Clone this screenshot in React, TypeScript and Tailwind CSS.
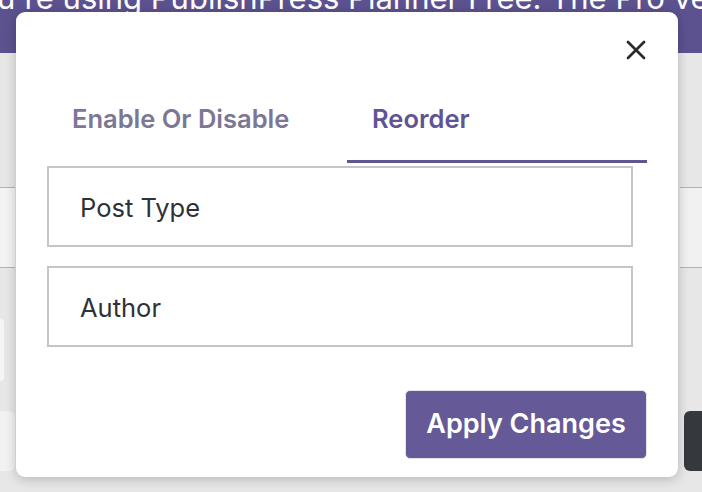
import { X } from "lucide-react";

const tabs = [
  { id: "toggle", label: "Enable Or Disable" },
  { id: "reorder", label: "Reorder" },
];

const fields = ["Post Type", "Author"];

export default function App() {
  const active = "reorder";

  return (
    <div className="relative w-[702px] h-[492px] overflow-hidden bg-[#e7e7e8] font-['Inter',sans-serif]">
      {/* Page behind the overlay */}
      <div className="h-[53px] bg-[#5c5290] overflow-hidden">
        <p className="-mt-[18px] -ml-[3px] whitespace-nowrap text-[31px] leading-[31px] text-white">
          u're using PublishPress Planner Free. The Pro version
        </p>
      </div>
      <div className="flex justify-between mt-[134px] h-[81px]">
        <div className="w-[15px] bg-[#f3f3f4] border-y border-[#b3aecb]" />
        <div className="w-[22px] bg-[#f1f1f2] border-y border-[#b3aecb]" />
      </div>
      <div className="mt-[51px] w-[4px] h-[62px] bg-[#f5f5f5] rounded-r" />
      <div className="flex justify-between mt-[30px] h-[60px]">
        <div className="w-[15px] bg-[#f2f2f2] rounded-r-md" />
        <div className="w-[18px] bg-[#35383c] rounded-l-md" />
      </div>

      {/* Modal */}
      <div className="absolute left-[16px] top-[12px] w-[662px] h-[465px] bg-white rounded-[9px] shadow-[0_2px_12px_rgba(0,0,0,0.22)] flex flex-col">
        <div className="h-[63px] flex justify-end pr-[26px] pt-[22px]">
          <button className="w-[32px] h-[32px] flex items-center justify-center text-[#2c2c2c]">
            <X className="w-[32px] h-[32px]" strokeWidth={2} />
          </button>
        </div>

        <div className="flex pl-[31px]">
          {tabs.map((tab) => (
            <div
              key={tab.id}
              className={`w-[300px] h-[88px] flex items-center pl-[25px] pt-[3px] text-[25.5px] font-semibold border-b-[3px] ${
                tab.id === active
                  ? "text-[#5f5594] border-[#5f5594]"
                  : "text-[#7b7795] border-transparent"
              }`}
            >
              {tab.label}
            </div>
          ))}
        </div>

        <div className="pl-[31px] pt-[3px] flex flex-col gap-[19px]">
          {fields.map((field) => (
            <div
              key={field}
              className="w-[586px] h-[81px] border-2 border-[#c5c5c9] flex items-center pl-[31px] pt-[3px] text-[25.5px] text-[#2e3236]"
            >
              {field}
            </div>
          ))}
        </div>

        <div className="flex justify-end pr-[31px] mt-[43px]">
          <button className="w-[242px] h-[69px] rounded-[5px] bg-[#655a97] border border-[#e3e3e8] text-white text-[27px] font-semibold">
            Apply Changes
          </button>
        </div>
      </div>
    </div>
  );
}
